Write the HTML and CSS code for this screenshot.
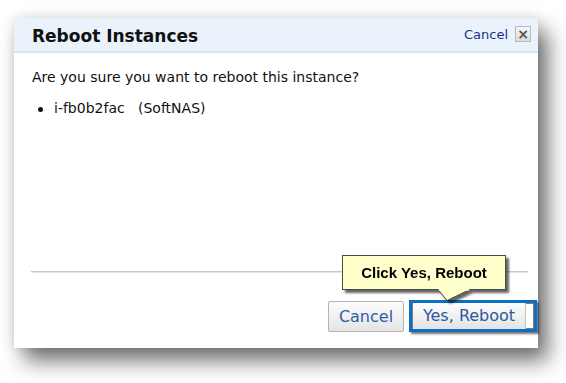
FILE: index.html
```html
<!DOCTYPE html>
<html>
<head>
<meta charset="utf-8">
<link rel="stylesheet" href="styles.css">
</head>
<body>
<div class="page">
  <div class="dialog">
    <div class="header">
      <span class="title">Reboot Instances</span>
      <span class="close">
        <a class="cancel-link">Cancel</a>
        <span class="xbox">×</span>
      </span>
    </div>
    <div class="body">
      <p class="question">Are you sure you want to reboot this instance?</p>
      <ul class="items">
        <li class="item"><span class="bullet"></span><span>i-fb0b2fac&nbsp;&nbsp; (SoftNAS)</span></li>
      </ul>
    </div>
    <div class="footer">
      <div class="sep"></div>
      <div class="buttons">
        <button class="btn btn-cancel">Cancel</button>
        <span class="highlight"><button class="btn btn-yes">Yes, Reboot</button></span>
      </div>
    </div>
    <div class="tip">
      <div class="tip-box">Click Yes, Reboot</div>
      <svg class="tip-arrow" width="40" height="14" viewBox="0 0 40 14">
        <polygon points="0,0.5 9,11.5 32,0.5" fill="#ffffcc" stroke="#4a4a4a" stroke-width="1"/>
        <rect x="0.8" y="0" width="30.5" height="1.6" fill="#ffffcc"/>
      </svg>
    </div>
  </div>
</div>
</body>
</html>
```
FILE: styles.css
```css
html, body {
  margin: 0;
  padding: 0;
  background: #ffffff;
}
.page {
  padding: 18px 0 0 14px;
  min-height: 383px;
  box-sizing: border-box;
  overflow: hidden;
}
.dialog {
  position: relative;
  width: 524px;
  height: 330px;
  background: #ffffff;
  display: flex;
  flex-direction: column;
  box-shadow: 10px 13px 20px rgba(0,0,0,0.55), 0 0 12px rgba(0,0,0,0.12);
  font-family: "DejaVu Sans", Verdana, sans-serif;
}
.header {
  height: 33px;
  background: #eaf2fc;
  border-bottom: 2px solid #d6e5f6;
  display: flex;
  align-items: center;
  justify-content: space-between;
  padding: 0 7px 0 18px;
}
.title {
  font-weight: bold;
  font-size: 17px;
  color: #111111;
  margin-top: 2px;
}
.close {
  display: flex;
  align-items: center;
  gap: 7px;
}
.cancel-link {
  font-size: 13px;
  color: #1c2f8c;
}
.xbox {
  width: 14px;
  height: 14px;
  border: 1px solid #b9b9b9;
  background: linear-gradient(#f7f7f7, #dcdcdc);
  color: #555;
  font-size: 14px;
  font-weight: bold;
  line-height: 14px;
  text-align: center;
  margin-top: -1px;
}
.body {
  padding: 16px 0 0 18px;
  color: #111111;
  font-size: 14px;
  line-height: 17px;
}
.question {
  margin: 0;
}
.items {
  list-style: none;
  margin: 14px 0 0 0;
  padding: 0;
}
.item {
  display: flex;
  align-items: center;
  gap: 11px;
  padding-left: 6px;
}
.bullet {
  width: 5px;
  height: 5px;
  border-radius: 50%;
  background: #111;
  margin-top: 1px;
}
.footer {
  margin-top: auto;
  padding: 0 1px 16px 17px;
}
.sep {
  height: 1px;
  border-top: 1px solid #c9c9c9;
  background: #e6e6e6;
  margin-right: 9px;
}
.buttons {
  display: flex;
  justify-content: flex-end;
  align-items: center;
  gap: 5px;
  padding-top: 28px;
}
.btn {
  font-family: "DejaVu Sans", Verdana, sans-serif;
  font-size: 16px;
  color: #2c5fa8;
  background: linear-gradient(#fdfdfd, #e4e4e4);
  border: 1px solid #b3b3b3;
  border-radius: 2px;
  padding: 0;
  margin: 0;
}
.btn-cancel {
  width: 76px;
  height: 31px;
}
.highlight {
  display: flex;
  border: 3px solid #0d6ec6;
  padding: 0 8px 0 1px;
  height: 26px;
  background: #fff;
  box-shadow: inset 0 0 0 1px #7a7a7a, 2px 2px 2px rgba(0,0,0,0.55);
  margin-top: -2px;
}
.btn-yes {
  width: 113px;
  height: 26px;
  border: none;
  border-right: 1px solid #c4c4c4;
  border-radius: 0;
  color: #2d5a9e;
}
.tip {
  position: absolute;
  left: 328px;
  top: 237px;
  filter: drop-shadow(3px 3px 1px rgba(0,0,0,0.6));
}
.tip-box {
  width: 162px;
  height: 33px;
  background: #ffffcc;
  border: 1px solid #4a4a4a;
  font-family: "Liberation Sans", Arial, sans-serif;
  font-weight: bold;
  font-size: 15px;
  color: #000;
  line-height: 33px;
  text-align: center;
}
.tip-arrow {
  position: absolute;
  left: 96px;
  top: 34px;
}
```
